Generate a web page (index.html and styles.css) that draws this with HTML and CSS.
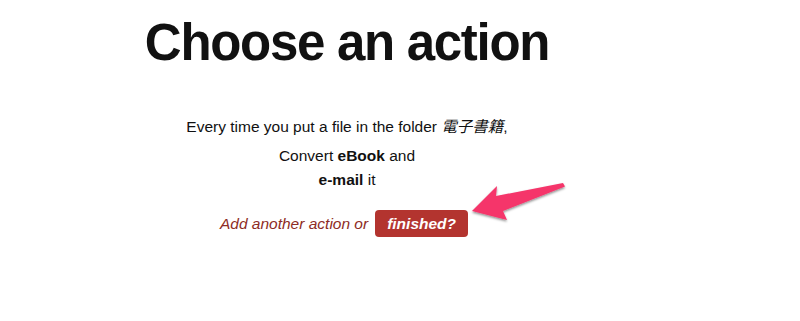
FILE: index.html
```html
<!DOCTYPE html>
<html>
<head>
<meta charset="utf-8">
<link rel="stylesheet" href="styles.css">
</head>
<body>
<main class="page">
  <h1 class="title">Choose an action</h1>
  <p class="trigger">Every time you put a file in the folder <em class="folder">電子書籍</em>,</p>
  <p class="step">Convert <b>eBook</b> and</p>
  <p class="step second"><b>e-mail</b> it</p>
  <div class="actions">
    <span class="another">Add another action or</span>
    <a class="finish" href="#">finished?</a>
  </div>
  <svg class="arrow" width="110" height="52" viewBox="0 0 110 52">
    <defs>
      <filter id="sh" x="-20%" y="-30%" width="140%" height="170%">
        <feDropShadow dx="0" dy="1.5" stdDeviation="1.3" flood-color="#000" flood-opacity="0.45"/>
      </filter>
    </defs>
    <path d="M7 33 L32 8 L31 18 L98 5 L100 8.5 L38 33 L42 42 Z" fill="#f5356b" filter="url(#sh)"/>
  </svg>
</main>
</body>
</html>
```

FILE: styles.css
```css
html, body {
  margin: 0;
  padding: 0;
  background: #fff;
}
body {
  font-family: "Liberation Sans", Arial, "Noto Sans CJK JP", sans-serif;
  color: #111;
}
.page {
  position: relative;
  width: 694px;
  text-align: center;
  padding-top: 11px;
}
.title {
  margin: 0;
  font-size: 51px;
  font-weight: bold;
  line-height: 64px;
  letter-spacing: -1.3px;
}
.trigger {
  margin: 43px 0 0;
  font-size: 15.5px;
  line-height: 18px;
}
.folder {
  font-style: italic;
}
.step {
  margin: 11px 0 0;
  font-size: 15.5px;
  line-height: 18px;
}
.step.second {
  margin-top: 6px;
}
.actions {
  margin-top: 21px;
  padding-right: 6px;
  display: flex;
  justify-content: center;
  align-items: center;
  gap: 7px;
  font-size: 15.5px;
}
.another {
  font-style: italic;
  color: #8e2c25;
}
.finish {
  display: inline-block;
  background: #b3342f;
  color: #fff;
  font-style: italic;
  font-weight: bold;
  text-decoration: none;
  font-size: 15.5px;
  line-height: 27px;
  padding: 0 12px;
  border-radius: 4px;
}
.arrow {
  position: absolute;
  left: 465px;
  top: 178px;
}
```
